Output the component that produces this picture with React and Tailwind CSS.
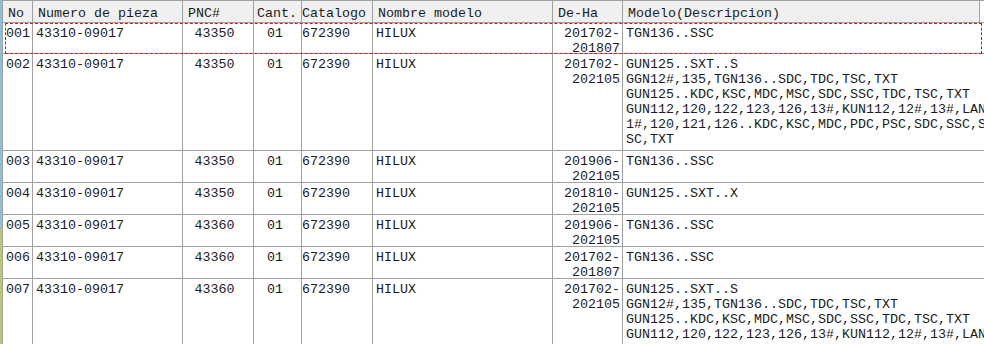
import React from "react";

const LONG_DESC = [
  "GUN125..SXT..S",
  "GGN12#,135,TGN136..SDC,TDC,TSC,TXT",
  "GUN125..KDC,KSC,MDC,MSC,SDC,SSC,TDC,TSC,TXT",
  "GUN112,120,122,123,126,13#,KUN112,12#,13#,LAN1",
  "1#,120,121,126..KDC,KSC,MDC,PDC,PSC,SDC,SSC,SS",
  "SC,TXT",
];

const rows = [
  { no: "001", part: "43310-09017", pnc: "43350", cant: "01", cat: "672390", name: "HILUX", from: "201702-", to: "201807", desc: ["TGN136..SSC"], h: "h-[31px]" },
  { no: "002", part: "43310-09017", pnc: "43350", cant: "01", cat: "672390", name: "HILUX", from: "201702-", to: "202105", desc: LONG_DESC, h: "h-[97px]" },
  { no: "003", part: "43310-09017", pnc: "43350", cant: "01", cat: "672390", name: "HILUX", from: "201906-", to: "202105", desc: ["TGN136..SSC"], h: "h-[32px]" },
  { no: "004", part: "43310-09017", pnc: "43350", cant: "01", cat: "672390", name: "HILUX", from: "201810-", to: "202105", desc: ["GUN125..SXT..X"], h: "h-[32px]" },
  { no: "005", part: "43310-09017", pnc: "43360", cant: "01", cat: "672390", name: "HILUX", from: "201906-", to: "202105", desc: ["TGN136..SSC"], h: "h-[32px]" },
  { no: "006", part: "43310-09017", pnc: "43360", cant: "01", cat: "672390", name: "HILUX", from: "201702-", to: "201807", desc: ["TGN136..SSC"], h: "h-[32px]" },
  { no: "007", part: "43310-09017", pnc: "43360", cant: "01", cat: "672390", name: "HILUX", from: "201702-", to: "202105", desc: LONG_DESC, h: "h-[97px]" },
];

const line = "border-r border-[#a0a0a0]";

export default function App() {
  return (
    <div className="relative w-[984px] h-[344px] overflow-hidden bg-white text-[#1c1c1c] font-['Liberation_Mono','Courier_New',monospace] text-[13.33px] leading-[15px]">
      <div className="flex h-full">
        {/* side strip */}
        <div className="w-[2px] shrink-0 flex flex-col">
          <div className="h-[228px] bg-[#93bcd6]" />
          <div className="flex-1 bg-[#b6ca70]" />
        </div>

        {/* grid */}
        <div className="flex-1 min-w-0 border-l border-[#a0a0a0]">
          {/* header */}
          <div className="flex h-[23px] border-t border-b border-[#a0a0a0] bg-[#f0f0f0] whitespace-nowrap">
            <div className={`w-[30px] shrink-0 pl-[5px] pt-[5px] ${line}`}>No</div>
            <div className={`w-[150px] shrink-0 pl-[5px] pt-[5px] ${line}`}>Numero de pieza</div>
            <div className={`w-[71px] shrink-0 pl-[5px] pt-[5px] ${line}`}>PNC#</div>
            <div className={`w-[48px] shrink-0 pl-[3px] pt-[5px] ${line}`}>Cant.</div>
            <div className={`w-[71px] shrink-0 pl-[0px] pt-[5px] ${line}`}>Catalogo</div>
            <div className={`w-[180px] shrink-0 pl-[5px] pt-[5px] ${line}`}>Nombre modelo</div>
            <div className={`w-[70px] shrink-0 pl-[5px] pt-[5px] ${line}`}>De-Ha</div>
            <div className={`w-[357px] shrink-0 pl-[5px] pt-[5px] ${line}`}>Modelo(Descripcion)</div>
            <div className="flex-1 bg-white" />
          </div>

          {/* rows */}
          {rows.map((r) => (
            <div key={r.no} className={`flex ${r.h} shrink-0 border-b border-[#a0a0a0] whitespace-nowrap`}>
              <div className={`w-[30px] shrink-0 pl-[3px] pt-[3px] ${line}`}>{r.no}</div>
              <div className={`w-[150px] shrink-0 pl-[3px] pt-[3px] ${line}`}>{r.part}</div>
              <div className={`w-[71px] shrink-0 pr-[7px] pt-[3px] text-center ${line}`}>{r.pnc}</div>
              <div className={`w-[48px] shrink-0 pr-[5px] pt-[3px] text-center ${line}`}>{r.cant}</div>
              <div className={`w-[71px] shrink-0 pl-[0px] pt-[3px] ${line}`}>{r.cat}</div>
              <div className={`w-[180px] shrink-0 pl-[3px] pt-[3px] ${line}`}>{r.name}</div>
              <div className={`w-[70px] shrink-0 pr-[2px] pt-[3px] text-right ${line}`}>
                <div>{r.from}</div>
                <div>{r.to}</div>
              </div>
              <div className="flex-1 min-w-0 pl-[3px] pt-[3px]">
                {r.desc.map((d, i) => (
                  <div key={i}>{d}</div>
                ))}
              </div>
            </div>
          ))}
        </div>
      </div>

      {/* focus rectangle on selected row */}
      <div className="absolute left-[5px] top-[23px] w-[977px] h-[31px] border border-dashed border-[#d01818] pointer-events-none" />
    </div>
  );
}
